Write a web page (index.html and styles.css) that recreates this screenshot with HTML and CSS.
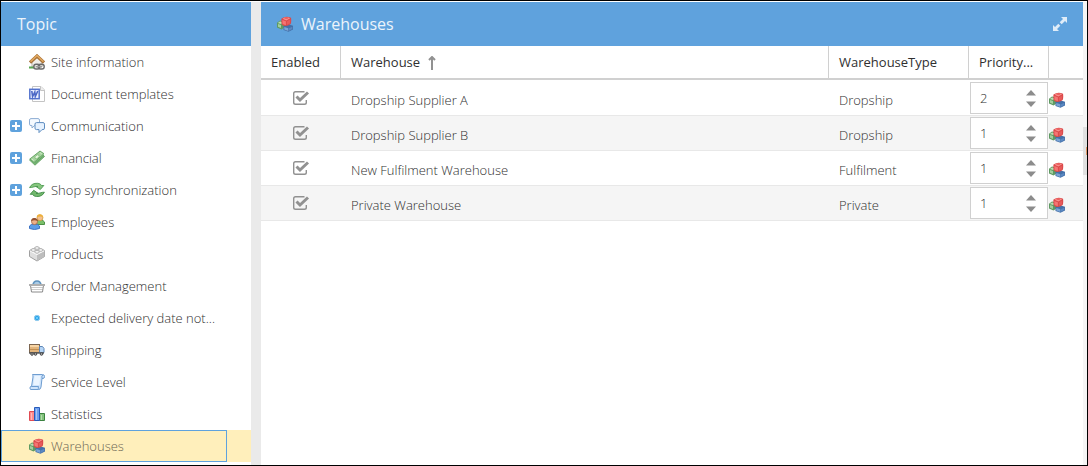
FILE: index.html
```html
<!DOCTYPE html>
<html lang="en">

<head>
    <meta charset="utf-8">
    <title>Warehouses</title>
    <link rel="stylesheet" href="styles.css">
</head>

<body>
    <svg class="defs" aria-hidden="true">
        <symbol id="cubes" viewBox="0 0 16 16">
            <path d="M0 6.800 3 4.600l5 1.200v5.500L4.500 13.400 0 11.400z" fill="#5f9a62" />
            <path d="M1 7.900l3 1.200v3L1 10.800z" fill="#a3cf9f" />
            <path d="M.8 6.900 3 5.400l3 .8-2 1.800z" fill="#b9deb3" />
            <path d="M6.500 10 11 8.200l5 1.600v3.700L11.500 15.800 6.500 14z" fill="#4470a8" />
            <path d="M7.300 10.900l4 1.400v2.600l-4-1.400z" fill="#7ba4d6" />
            <path d="M12 12.300l3.300-1.500v2.300L12 14.700z" fill="#5a88c2" />
            <path d="M4.500 2.500Q9-.8 14 1.800q.6 3.400-.3 6.200Q9 11.400 5 8.700 4 5.500 4.500 2.500z" fill="#d94849" />
            <path d="M5.300 4l3.600 1.300v4L5.600 8.100z" fill="#f57573" />
            <path d="M9.800 5.200 13.300 3.500l-.3 3.900-3.200 1.500z" fill="#e65b5b" />
            <path d="M5.500 2.800Q9 .2 13.200 2.300L9.300 4.400z" fill="#fa8f8b" />
            <ellipse cx="9.300" cy="1.900" rx="2" ry="1" fill="#e85f5e" />
        </symbol>
        <symbol id="plus" viewBox="0 0 12 12">
            <rect width="12" height="12" rx="2" fill="#5fa2dd" />
            <path d="M6 2v8M2 6h8" stroke="#fff" stroke-width="2" />
        </symbol>
        <symbol id="spin-up" viewBox="0 0 10 6">
            <path d="M0 5.500 5 0l5 5.500z" fill="#8c8c8c" />
        </symbol>
        <symbol id="spin-down" viewBox="0 0 10 6">
            <path d="M0 .5 5 6l5-5.500z" fill="#8c8c8c" />
        </symbol>
    </svg>

    <div class="app">
        <nav class="sidebar">
            <h2 class="panel-header">Topic</h2>
            <ul class="tree">
                <li class="tree-item">
                    <a href="#site" class="tree-link">
                        <svg class="icon" viewBox="0 0 16 16">
                            <path d="M3 7.500 8 3l5 4.500V13H3z" fill="#f1eee8" stroke="#b9b4aa" />
                            <path d="M1 8.500 8 2l7 6.500" fill="none" stroke="#a56e34" stroke-width="3.200" />
                            <path d="M1.500 7.700 8 1.700l6.500 6" fill="none" stroke="#dfa65e" stroke-width="1.600" />
                            <path d="M0 12.500h5v2H0z" fill="#57a64f" />
                            <rect x="4.800" y="10.300" width="6" height="4.700" rx="2.300" fill="none" stroke="#6a6a6a" stroke-width="1.400" />
                            <rect x="9.200" y="10.300" width="6" height="4.700" rx="2.300" fill="none" stroke="#6a6a6a" stroke-width="1.400" />
                            <path d="M7 12.600h6" stroke="#999" stroke-width="1.300" />
                        </svg>
                        <span class="tree-text">Site information</span>
                    </a>
                </li>
                <li class="tree-item">
                    <a href="#documents" class="tree-link">
                        <svg class="icon" viewBox="0 0 16 16">
                            <path d="M3.500.5H12l3.500 3.500v11.500h-12z" fill="#fff" stroke="#c4c4c4" />
                            <path d="M11.500.5V4.500h4" fill="#eee" stroke="#c4c4c4" />
                            <rect x=".8" y="3.300" width="9.400" height="9.400" fill="#eef2ff" stroke="#5473ce" stroke-width="1.500" />
                            <path d="M2.800 5l.8 5.500L5.800 6l.5 4.500L8.800 5" fill="none" stroke="#4c68c6" stroke-width="1.600" />
                        </svg>
                        <span class="tree-text">Document templates</span>
                    </a>
                </li>
                <li class="tree-item">
                    <button type="button" class="toggle" aria-label="Expand Communication"><svg><use href="#plus" /></svg></button>
                    <a href="#communication" class="tree-link">
                        <svg class="icon" viewBox="0 0 16 16">
                            <path d="M2 .6h7q1.500 0 1.500 1.500v4Q10.500 7.600 9 7.600H5.500L3 10V7.600H2Q.5 7.600.5 6.100v-4Q.5.600 2 .6z" fill="#f5faff" stroke="#8dadd3" />
                            <path d="M7.500 4.600H14q1.500 0 1.500 1.500v4q0 1.500-1.500 1.500h-1l-3 3v-3H7.500Q6 11.600 6 10.100v-4q0-1.500 1.500-1.500z" fill="#e6f2ff" stroke="#5d8cc0" />
                        </svg>
                        <span class="tree-text">Communication</span>
                    </a>
                </li>
                <li class="tree-item">
                    <button type="button" class="toggle" aria-label="Expand Financial"><svg><use href="#plus" /></svg></button>
                    <a href="#financial" class="tree-link">
                        <svg class="icon" viewBox="0 0 16 16">
                            <path d="M.5 10 11 1.500l4.500 5L6 15.200z" fill="#82bd7e" stroke="#5a9c5a" stroke-width=".8" />
                            <path d="M.8 9 11 1l4 2.700L5 12.500z" fill="#a5d39d" stroke="#5a9c5a" stroke-width=".8" />
                            <ellipse cx="8" cy="6.800" rx="2.400" ry="1.600" fill="#e6f5dc" stroke="#7fb97a" stroke-width=".8" transform="rotate(-38 8 6.800)" />
                            <path d="M2.800 9l2 1.500M11 2.600l1.800 1.300" stroke="#d5edce" />
                            <path d="M5.500 13.800 15 5.500" stroke="#5a9c5a" stroke-width=".8" />
                        </svg>
                        <span class="tree-text">Financial</span>
                    </a>
                </li>
                <li class="tree-item">
                    <button type="button" class="toggle" aria-label="Expand Shop synchronization"><svg><use href="#plus" /></svg></button>
                    <a href="#sync" class="tree-link">
                        <svg class="icon" viewBox="0 0 16 16">
                            <path d="M.6 5.600C2 2.500 5 1 8.500 1.300c2 .2 3.300.9 4 2.200h2.300L11.300 7.500 7 4.500h2C6.500 3.800 3.500 5.800.6 5.600z" fill="#86c67e" stroke="#4c9850" stroke-width=".9" />
                            <path d="M15.400 10.200C14 13.300 11 14.800 7.500 14.500c-2-.2-3.300-.9-4-2.200H1.200L4.700 8.300 9 11.300H7c2.500.7 5.500-1.300 8.400-1.100z" fill="#72b86c" stroke="#418b47" stroke-width=".9" />
                        </svg>
                        <span class="tree-text">Shop synchronization</span>
                    </a>
                </li>
                <li class="tree-item">
                    <a href="#employees" class="tree-link">
                        <svg class="icon" viewBox="0 0 16 16">
                            <path d="M6.500 10.500V8q1-2 4.500-2t4.500 2v2.500z" fill="#7abf6a" stroke="#4d9147" />
                            <circle cx="11" cy="3.800" r="2.900" fill="#f4c08e" stroke="#d3983f" stroke-width=".8" />
                            <path d="M7.600 3.500Q8 0 11 .3t3.400 3.200Q11 1.500 7.600 3.500z" fill="#eeb03a" />
                            <path d="M.5 14.500V12q1-2 5-2t5 2v2.500q-5 2-10 0z" fill="#5c9de8" stroke="#3f73c4" />
                            <circle cx="5.500" cy="7.600" r="3" fill="#eeb089" stroke="#a86846" stroke-width=".8" />
                            <path d="M2 7.300Q2.500 3.800 5.500 4T9 7.300Q5.500 5.300 2 7.300z" fill="#93502f" />
                        </svg>
                        <span class="tree-text">Employees</span>
                    </a>
                </li>
                <li class="tree-item">
                    <a href="#products" class="tree-link">
                        <svg class="icon" viewBox="0 0 16 16">
                            <path d="M.5 4.500 8 1l7.500 3.500v6L8 15 .5 10.500z" fill="#dedede" stroke="#9f9f9f" />
                            <path d="M8 8.500l7.500-4v6L8 15z" fill="#bdbdbd" />
                            <path d="M.8 4.800 8 8.500l7.200-3.700" fill="none" stroke="#fff" />
                            <g fill="#f3f3f3" stroke="#aaa" stroke-width=".8">
                                <ellipse cx="8" cy="2" rx="2.200" ry="1.400" />
                                <ellipse cx="4.300" cy="4" rx="2.200" ry="1.400" />
                                <ellipse cx="11.700" cy="4" rx="2.200" ry="1.400" />
                                <ellipse cx="8" cy="5.800" rx="2.200" ry="1.400" />
                            </g>
                        </svg>
                        <span class="tree-text">Products</span>
                    </a>
                </li>
                <li class="tree-item">
                    <a href="#orders" class="tree-link">
                        <svg class="icon" viewBox="0 0 16 16">
                            <path d="M4 7Q4.500 3 8 3t4 4" fill="#a9cbe6" stroke="#5f93be" stroke-width="1.700" />
                            <path d="M1.500 7.500h13l-1 6.500h-11z" fill="#fff" stroke="#8a8a8a" />
                            <path d="M2.500 9.500h11M2.500 11.500h11" stroke="#999" stroke-dasharray="1 1" />
                            <path d="M0 7h16" stroke="#b0b0b0" stroke-width="2" />
                        </svg>
                        <span class="tree-text">Order Management</span>
                    </a>
                </li>
                <li class="tree-item">
                    <a href="#delivery" class="tree-link">
                        <svg class="icon" viewBox="0 0 16 16">
                            <circle cx="8" cy="8" r="2.700" fill="#2ea5ea" stroke="#91cbed" />
                            <circle cx="8" cy="8" r="1" fill="#7bd6ff" />
                        </svg>
                        <span class="tree-text">Expected delivery date not...</span>
                    </a>
                </li>
                <li class="tree-item">
                    <a href="#shipping" class="tree-link">
                        <svg class="icon" viewBox="0 0 16 16">
                            <rect x=".5" y="2.500" width="10" height="8" fill="#e3b57c" stroke="#7d6650" />
                            <path d="M1 4h9" stroke="#ffe0b2" stroke-width="1.500" />
                            <path d="M1 7.500h9" stroke="#c28f51" />
                            <path d="M10.500 4.500h3l1.500 2v4h-4.500z" fill="#b6d5f5" stroke="#5e87b7" />
                            <path d="M0 11h15" stroke="#555" stroke-width="1.400" />
                            <g fill="#aaa" stroke="#4c4c4c">
                                <circle cx="3" cy="12" r="1.300" />
                                <circle cx="6.500" cy="12" r="1.300" />
                                <circle cx="12.500" cy="12" r="1.300" />
                            </g>
                        </svg>
                        <span class="tree-text">Shipping</span>
                    </a>
                </li>
                <li class="tree-item">
                    <a href="#service" class="tree-link">
                        <svg class="icon" viewBox="0 0 16 16">
                            <path d="M3.500.5h10Q15.500.5 15.500 2.500T14 4.500h-1L12 13q-.3 2.500-2.500 2.500h-8Q.3 14 1.500 12.500h1L4 3Q4 1.500 3.500.5z" fill="#cfe4fb" stroke="#6e9dd0" />
                            <path d="M13 4.500q-.5-3 .8-3.500M2.500 12.500h7q-.8 2 .5 3" fill="none" stroke="#6e9dd0" />
                            <path d="M5.500 2h6L10.300 11h-6z" fill="#ebf5ff" />
                        </svg>
                        <span class="tree-text">Service Level</span>
                    </a>
                </li>
                <li class="tree-item">
                    <a href="#statistics" class="tree-link">
                        <svg class="icon" viewBox="0 0 16 16">
                            <path d="M.5 5.500h5v9h-5z" fill="#ff8b8b" stroke="#e04a52" />
                            <path d="M10.500 7.500h5v7h-5z" fill="#82c27b" stroke="#3b8240" />
                            <path d="M5.500 1.500h5v13h-5z" fill="#6d9ff0" stroke="#285bb9" />
                            <path d="M2.500 7v7M7.500 3v11M12.500 9v5" stroke="#fff" stroke-opacity=".4" />
                        </svg>
                        <span class="tree-text">Statistics</span>
                    </a>
                </li>
                <li class="tree-item selected">
                    <a href="#warehouses" class="tree-link">
                        <svg class="icon"><use href="#cubes" /></svg>
                        <span class="tree-text">Warehouses</span>
                    </a>
                </li>
            </ul>
        </nav>

        <div class="splitter"></div>

        <main class="content">
            <div class="panel-header">
                <svg class="icon"><use href="#cubes" /></svg>
                <h1 class="panel-title">Warehouses</h1>
                <button type="button" class="expand" aria-label="Expand panel">
                    <svg viewBox="0 0 14 14">
                        <path d="M8 0h6v6l-2-2-3.300 3.300-2-2L10 2zM6 14H0V8l2 2 3.300-3.300 2 2L4 12z" fill="#dfecf8" />
                    </svg>
                </button>
            </div>
            <table class="grid">
                <colgroup>
                    <col class="col-enabled">
                    <col>
                    <col class="col-type">
                    <col class="col-priority">
                    <col class="col-action">
                </colgroup>
                <thead>
                    <tr>
                        <th>Enabled</th>
                        <th>
                            Warehouse
                            <svg class="sort" viewBox="0 0 8 14">
                                <path d="M4 14V1M1 4l3-3 3 3" fill="none" stroke="#919191" stroke-width="2" />
                            </svg>
                        </th>
                        <th>WarehouseType</th>
                        <th>Priority...</th>
                        <th></th>
                    </tr>
                </thead>
                <tbody>
                    <tr>
                        <td class="center"><input type="checkbox" class="check" aria-label="Dropship Supplier A enabled" checked></td>
                        <td>Dropship Supplier A</td>
                        <td>Dropship</td>
                        <td class="flush">
                            <div class="spinner">
                                <input type="number" value="2" aria-label="Priority">
                                <div class="spin-buttons">
                                    <button type="button" aria-label="Increase"><svg><use href="#spin-up" /></svg></button>
                                    <button type="button" aria-label="Decrease"><svg><use href="#spin-down" /></svg></button>
                                </div>
                            </div>
                        </td>
                        <td class="action"><button type="button" aria-label="Open warehouse"><svg class="icon"><use href="#cubes" /></svg></button></td>
                    </tr>
                    <tr>
                        <td class="center"><input type="checkbox" class="check" aria-label="Dropship Supplier B enabled" checked></td>
                        <td>Dropship Supplier B</td>
                        <td>Dropship</td>
                        <td class="flush">
                            <div class="spinner">
                                <input type="number" value="1" aria-label="Priority">
                                <div class="spin-buttons">
                                    <button type="button" aria-label="Increase"><svg><use href="#spin-up" /></svg></button>
                                    <button type="button" aria-label="Decrease"><svg><use href="#spin-down" /></svg></button>
                                </div>
                            </div>
                        </td>
                        <td class="action"><button type="button" aria-label="Open warehouse"><svg class="icon"><use href="#cubes" /></svg></button></td>
                    </tr>
                    <tr>
                        <td class="center"><input type="checkbox" class="check" aria-label="New Fulfilment Warehouse enabled" checked></td>
                        <td>New Fulfilment Warehouse</td>
                        <td>Fulfilment</td>
                        <td class="flush">
                            <div class="spinner">
                                <input type="number" value="1" aria-label="Priority">
                                <div class="spin-buttons">
                                    <button type="button" aria-label="Increase"><svg><use href="#spin-up" /></svg></button>
                                    <button type="button" aria-label="Decrease"><svg><use href="#spin-down" /></svg></button>
                                </div>
                            </div>
                        </td>
                        <td class="action"><button type="button" aria-label="Open warehouse"><svg class="icon"><use href="#cubes" /></svg></button></td>
                    </tr>
                    <tr>
                        <td class="center"><input type="checkbox" class="check" aria-label="Private Warehouse enabled" checked></td>
                        <td>Private Warehouse</td>
                        <td>Private</td>
                        <td class="flush">
                            <div class="spinner">
                                <input type="number" value="1" aria-label="Priority">
                                <div class="spin-buttons">
                                    <button type="button" aria-label="Increase"><svg><use href="#spin-up" /></svg></button>
                                    <button type="button" aria-label="Decrease"><svg><use href="#spin-down" /></svg></button>
                                </div>
                            </div>
                        </td>
                        <td class="action"><button type="button" aria-label="Open warehouse"><svg class="icon"><use href="#cubes" /></svg></button></td>
                    </tr>
                </tbody>
            </table>
        </main>

        <div class="edge">
            <div class="edge-handle"></div>
        </div>
    </div>
</body>

</html>
```
FILE: styles.css
```css
* {
    box-sizing: border-box;
}

body {
    margin: 0;
    background-color: #fff;
    color: #303030;
    font-family: 'Open Sans', sans-serif;
    font-size: 13px;
    font-weight: 300;
    line-height: 20px;
}

button {
    display: block;
    padding: 0;
    border: none;
    background: none;
    cursor: pointer;
}

svg {
    display: block;
}

.defs {
    display: none;
}

.app {
    display: flex;
    min-height: 100vh;
    border: 1px solid #000;
    padding-top: 1px;
}

/* Panels */
.panel-header {
    display: flex;
    align-items: center;
    gap: 8px;
    height: 44px;
    margin: 0;
    padding: 0 16px;
    background-color: #5fa2dd;
    color: #ecf4fb;
    font-size: 16px;
    font-weight: 400;
}

.panel-title {
    flex: 1;
    margin: 0;
    font-size: 16px;
    font-weight: 400;
}

.expand svg {
    width: 14px;
    height: 14px;
}

.icon {
    flex: none;
    width: 16px;
    height: 16px;
}

/* Topic tree */
.sidebar {
    flex: none;
    width: 250px;
}

.tree {
    margin: 0;
    padding: 0;
    list-style: none;
}

.tree-item {
    display: grid;
    grid-template-columns: 28px 1fr;
    align-items: center;
    height: 32px;
    padding-right: 24px;
}

.toggle {
    grid-column: 1;
    grid-row: 1;
    padding-left: 9px;
}

.toggle svg {
    width: 12px;
    height: 12px;
}

.tree-link {
    display: flex;
    grid-column: 1 / 3;
    grid-row: 1;
    align-items: center;
    gap: 6px;
    min-width: 0;
    height: 32px;
    margin-left: 28px;
    color: #303030;
    text-decoration: none;
}

.tree-text {
    white-space: nowrap;
}

.selected {
    background-color: #ffefbb;
}

.selected .tree-link {
    margin-left: 0;
    padding-left: 27px;
    border: 1px solid #5fa2dd;
    color: #6c6654;
}

.splitter {
    flex: none;
    width: 10px;
    background-color: #eaeaea;
}

.content {
    flex: 1;
    min-width: 0;
}

/* Warehouse grid */
.grid {
    width: 100%;
    border-spacing: 0;
    table-layout: fixed;
}

.col-enabled,
.col-priority {
    width: 80px;
}

.col-type {
    width: 140px;
}

.col-action {
    width: 34px;
}

th {
    height: 34px;
    padding: 0 10px;
    border-right: 1px solid #d0d0d0;
    border-bottom: 2px solid #d0d0d0;
    font-weight: 400;
    text-align: left;
    white-space: nowrap;
}

th:last-child {
    border-right: none;
}

.sort {
    display: inline-block;
    width: 8px;
    height: 14px;
    margin: 0 0 2px 5px;
    vertical-align: middle;
}

td {
    height: 35px;
    padding: 4px 10px 0;
    border-bottom: 1px solid #e8e8e8;
}

tbody tr:first-child td {
    height: 36px;
    border-top: 1px solid #fff;
}

tbody tr:nth-child(even) {
    background-color: #f5f5f5;
}

.center {
    padding-top: 0;
    text-align: center;
}

.flush {
    padding: 1px 0;
}

.action {
    padding: 3px 0 0;
}

.check {
    display: block;
    width: 18px;
    height: 16px;
    margin: 0 auto;
    appearance: none;
    background: url("data:image/svg+xml,%3Csvg xmlns='http://www.w3.org/2000/svg' viewBox='0 0 18 16'%3E%3Cpath d='M12.500 1.700H3.500Q1.700 1.700 1.700 3.500v9q0 1.800 1.800 1.800h9q1.800 0 1.800-1.800V10' fill='none' stroke='%23919191' stroke-width='1.400'/%3E%3Cpath d='M4.500 6.500 8 10l8-7.500' fill='none' stroke='%23919191' stroke-width='3'/%3E%3C/svg%3E") no-repeat;
}

.spinner {
    display: flex;
    align-items: center;
    width: 78px;
    height: 32px;
    margin-left: 1px;
    padding: 0 11px 0 9px;
    border: 1px solid #d0d0d0;
    background-color: #fff;
}

.spinner input {
    flex: 1;
    min-width: 0;
    padding: 0;
    border: none;
    outline: none;
    background: none;
    color: #303030;
    font: inherit;
    appearance: textfield;
}

.spinner input::-webkit-inner-spin-button {
    display: none;
}

.spin-buttons {
    display: grid;
    gap: 5px;
}

.spin-buttons svg {
    width: 10px;
    height: 6px;
}

/* Collapsed panel on the right */
.edge {
    display: flex;
    align-items: flex-start;
    flex: none;
    width: 4px;
    padding-top: 125px;
    background-color: #f5f5f5;
}

.edge-handle {
    width: 4px;
    height: 48px;
    background: linear-gradient(#e39a6b, #e39a6b) right 20px / 1px 8px no-repeat #e0e0e0;
}
```
